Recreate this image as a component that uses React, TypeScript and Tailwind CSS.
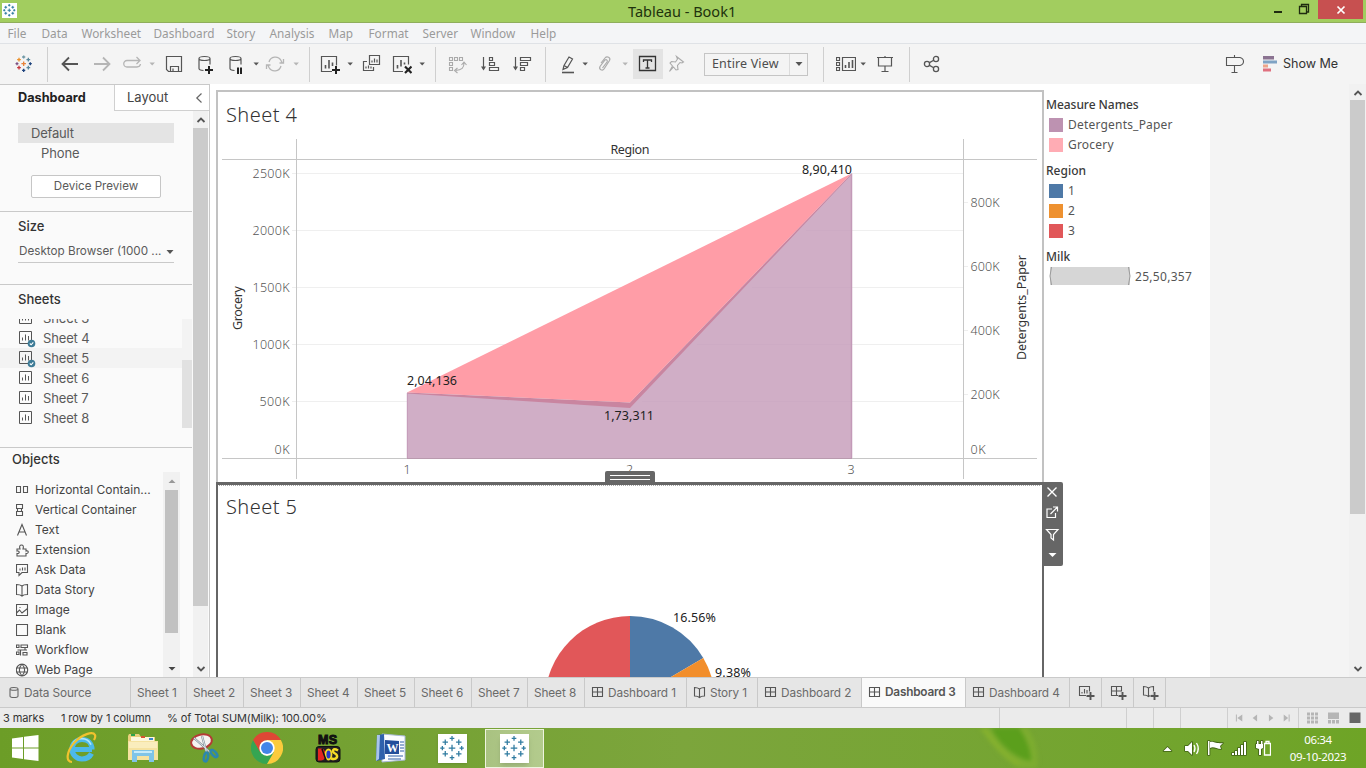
import React from "react";

type IconProps = { className?: string; children: React.ReactNode };

function Icon({ className = "", children }: IconProps) {
  return (
    <svg viewBox="0 0 20 20" className={`h-5 w-5 shrink-0 fill-none stroke-[#555] ${className}`}>
      {children}
    </svg>
  );
}

function Caret({ className = "" }: { className?: string }) {
  return (
    <svg viewBox="0 0 8 8" className={`h-2 w-2 shrink-0 ${className}`}>
      <path d="M1.500 2.500h5.400L4.200 5.600z" fill="currentColor" />
    </svg>
  );
}

function WideCaret({ className = "" }: { className?: string }) {
  return (
    <svg viewBox="0 0 8 6" className={`h-1.5 w-2 shrink-0 ${className}`}>
      <path d="M.5 1h7L4 5z" fill="#555" />
    </svg>
  );
}

function Sep({ className = "" }: { className?: string }) {
  return <div className={`h-[35px] w-px shrink-0 bg-[#cfcfcf] ${className}`} />;
}

const plus = (x: number, y: number, r: number) => `M${x - r} ${y}h${2 * r}M${x} ${y - r}v${2 * r}`;

function TableauMark({ className = "", variant = "blue" }: { className?: string; variant?: "blue" | "color" | "tiny" }) {
  const blue = "#2f7ba0";
  const c = variant === "color"
    ? ["#e8833a", "#5b879b", "#7199a6", "#c6363c", "#1f447e", "#eb912c", "#59879b", "#7b4f80", "#1f447e"]
    : [blue, blue, blue, blue, blue, blue, blue, blue, blue];
  const w = variant === "color" ? 2 : variant === "tiny" ? 2 : 1.3;
  return (
    <svg viewBox="0 0 30 30" className={`shrink-0 fill-none ${className}`} strokeWidth={w}>
      <path d={plus(14.5, 14.5, 3.4)} stroke={c[0]} />
      <path d={plus(14.5, 4.5, 2.4)} stroke={c[2]} />
      <path d={plus(14.5, 24.5, 2.4)} stroke={c[4]} />
      <path d={plus(4.5, 14.5, 2.2)} stroke={c[7]} />
      <path d={plus(24.5, 14.5, 2.2)} stroke={c[8]} />
      <path d={plus(7.5, 8.5, 2.8)} stroke={c[5]} />
      <path d={plus(21.5, 8.5, 2.8)} stroke={c[6]} />
      <path d={plus(7.5, 20.5, 2.8)} stroke={c[3]} />
      <path d={plus(21.5, 20.5, 2.8)} stroke={c[1]} />
    </svg>
  );
}

function TitleBar() {
  return (
    <header className="flex h-[23px] shrink-0 items-start border-b border-[#8fae5c] bg-[#a2cd5f]">
      <div className="ml-0.5 mt-[3px] flex h-[15px] w-[15px] items-center justify-center bg-white">
        <TableauMark variant="tiny" className="h-[15px] w-[15px]" />
      </div>
      <h1 className="ml-[611px] w-[120px] font-['Noto_Sans'] text-[14.500px] leading-[23px] text-[#20320c] whitespace-nowrap">Tableau - Book1</h1>
      <div className="ml-auto flex">
        <svg viewBox="0 0 50 19" className="h-[19px] w-[50px] fill-none stroke-[#1f2b10]">
          <path d="M6 12h8" strokeWidth="2" />
          <path d="M31.500 6.500h7v7h-7zM33.500 6V4.500h7V12H39" strokeWidth="1.3" />
        </svg>
        <div className="mr-[3px] flex h-[19px] w-[45px] items-center justify-center bg-[#c75050]">
          <svg viewBox="0 0 10 10" className="h-2.5 w-2.5 stroke-white"><path d="M1.500 1.500l7 7M8.500 1.500l-7 7" strokeWidth="1.7" /></svg>
        </div>
      </div>
    </header>
  );
}

function MenuBar() {
  const items: [string, string][] = [
    ["File", "w-[34px]"], ["Data", "w-10"], ["Worksheet", "w-[72px]"], ["Dashboard", "w-[73px]"], ["Story", "w-[43px]"],
    ["Analysis", "w-[59px]"], ["Map", "w-10"], ["Format", "w-[54px]"], ["Server", "w-12"], ["Window", "w-[60px]"], ["Help", "w-10"],
  ];
  return (
    <nav className="flex h-[21px] shrink-0 items-center border-b border-[#dfe2e6] bg-[#f4f5f7] pt-0.5 pl-[7.500px] font-['Noto_Sans'] text-[11.800px] text-[#9a9a9a]">
      {items.map(([t, w]) => <span key={t} className={`${w} shrink-0`}>{t}</span>)}
    </nav>
  );
}

function Toolbar() {
  return (
    <div className="flex h-10 shrink-0 items-center bg-[#f4f4f4] font-['Noto_Sans']">
      <TableauMark variant="color" className="ml-3.5 h-5 w-5" />
      <Sep className="ml-[13px]" />
      <Icon className="ml-3"><path d="M18 10H3M9 3.500L2.500 10 9 16.500" strokeWidth="1.800" /></Icon>
      <Icon className="ml-3 stroke-[#b5b5b5]!"><path d="M2 10h15M11 3.500L17.500 10 11 16.500" strokeWidth="1.800" /></Icon>
      <Icon className="ml-2.5 stroke-[#b5b5b5]!"><path d="M15 13H5a3.200 3.200 0 010-6.500h12.500M14.500 3l3.500 3.500-3.500 3.500M15 13q3 0 3.500-3" strokeWidth="1.3" /></Icon>
      <Caret className="ml-1.5 text-[#b5b5b5]" />
      <Icon className="ml-2"><path d="M2.500 2.500h15v15h-13l-2-2zM6.500 17.500v-5h8v5M9 17.500v-3" strokeWidth="1.2" /></Icon>
      <Icon className="ml-3">
        <path d="M3 4.500v10c0 1 1.500 1.800 4.500 2M14 4.500v6M3 4.500c0-1.200 2.300-2 5.500-2s5.500.8 5.500 2-2.300 2-5.500 2-5.500-.8-5.500-2" strokeWidth="1.2" />
        <path d="M9 16h8M13 12v8" stroke="#222" strokeWidth="2" />
      </Icon>
      <Icon className="ml-[11px]">
        <path d="M3 4.500v10c0 1 1.500 1.800 4.500 2M14 4.500v6M3 4.500c0-1.200 2.300-2 5.500-2s5.500.8 5.500 2-2.300 2-5.500 2-5.500-.8-5.500-2" strokeWidth="1.2" />
        <path d="M11 13.500v6.500M14 13.500v6.500" stroke="#222" strokeWidth="2" />
      </Icon>
      <Caret className="ml-[5px] text-[#555]" />
      <Icon className="ml-[5px] stroke-[#b5b5b5]!"><path d="M4 8a6.500 6.500 0 0112-1.500l1 2M16 12A6.500 6.500 0 014 13.500l-1-2M18.500 5v4h-4M1.500 15v-4h4" strokeWidth="1.3" /></Icon>
      <Caret className="ml-[7px] text-[#b5b5b5]" />
      <Sep className="ml-[9px]" />
      <Icon className="ml-2.5">
        <path d="M12 17.500H1.500v-15h15v9" strokeWidth="1.200" /><path d="M5.500 14.500V11M9 14.500V6M12.500 12V8.500" strokeWidth="1.6" />
        <path d="M12 16h8M16 12v8" stroke="#222" strokeWidth="2" />
      </Icon>
      <Caret className="ml-1.5 text-[#555]" />
      <Icon className="ml-[7px]"><path d="M8.500 1.500h10v9h-10zM6 7.500H2.500v9h10v-3.500M11 8.500v-2M13.500 8.500v-4M16 8.500v-3M5 14.500v-2M7.500 14.500v-3M10 14.500v-2" strokeWidth="1.200" /></Icon>
      <Icon className="ml-[11px]">
        <path d="M11 17.500H1.500v-15h15v8" strokeWidth="1.200" /><path d="M5.500 14.500V11M9 12.500V6M12.500 10.500V8.500" strokeWidth="1.6" />
        <path d="M13 12.500l6.500 6.500M19.500 12.500L13 19" stroke="#222" strokeWidth="2.200" />
      </Icon>
      <Caret className="ml-1.5 text-[#555]" />
      <Sep className="ml-[9px]" />
      <Icon className="ml-[11px] stroke-[#aaa]!"><path d="M2.500 3.500h3v3h-3zM7.500 3.500h3v3h-3zM12.500 3.500h3v3h-3zM2.500 8.500h3v3h-3zM2.500 13.500h3v3h-3zM17 9c0 5-2 7-8.500 7.500M14.500 11l2.500-3 2.500 3M10.500 14L7.500 16.500l3 2.500" strokeWidth="1.1" /></Icon>
      <Icon className="ml-[13px]"><path d="M3.500 3v12" strokeWidth="1.200" /><path d="M1 12.500h5l-2.500 4z" fill="#555" stroke="none" /><path d="M9.500 3.500h3v3h-3zM9.500 8.500h5v3h-5zM9.500 13.500h9v3h-9z" strokeWidth="1.200" /></Icon>
      <Icon className="ml-3"><path d="M3.500 3v12" strokeWidth="1.200" /><path d="M1 12.500h5l-2.500 4z" fill="#555" stroke="none" /><path d="M8.500 3.500h10v3h-10zM8.500 8.500h7v3h-7zM8.500 13.500h4v3h-4z" strokeWidth="1.200" /></Icon>
      <Sep className="ml-[13px]" />
      <Icon className="ml-3"><path d="M6 11.500l5-8.500 3.500 2-5 8.500-4.500 2zM6 11.500l3.500 2M5 15.500l2-1" strokeWidth="1.200" /><path d="M4 18.500h12" strokeWidth="1.600" /></Icon>
      <Caret className="ml-[3px] text-[#555]" />
      <Icon className="ml-1.5 stroke-[#aaa]!"><path d="M6 9l4-5c2-2.500 6-.5 4.500 2.500L9 15c-1.500 2.300-5.500.5-4-2.500L10 6c1.500-1 3 .5 2 2l-4.500 6" strokeWidth="1.200" /></Icon>
      <Caret className="ml-1.5 text-[#b5b5b5]" />
      <div className="ml-1 flex h-[30px] w-[30px] shrink-0 items-center justify-center bg-[#e3e3e3]">
        <Icon className="stroke-[#333]!"><path d="M1.500 2.500h16v14h-16zM5.500 8V6h8v2M9.500 6v8M7.500 14h4" strokeWidth="1.300" /></Icon>
      </div>
      <Icon className="ml-1 stroke-[#aaa]!"><path d="M9.500 2.500l7 5.500-1.500 1-2-.5-2.500 3 .5 4-2 .5-2.500-3L2.500 17.500 5.500 12 3 9l1.500-1.500 4 .5 2-3z" strokeWidth="1.1" /></Icon>
      <div className="ml-[17px] flex h-[23px] w-[104px] shrink-0 items-center border border-[#c5c5c5] text-[12.500px] tracking-[0.15px] text-[#4d4d4d]">
        <span className="w-[84px] pl-[7px] whitespace-nowrap">Entire View</span>
        <div className="flex h-full flex-1 items-center justify-center border-l border-[#dcdcdc]"><WideCaret /></div>
      </div>
      <Sep className="ml-[15px]" />
      <Icon className="ml-3"><path d="M.5 3.500h3v3h-3zM.5 8.500h3v3h-3zM.5 13.500h3v3h-3zM6.500 3.500h13v13h-13z" strokeWidth="1.200" /><path d="M9.500 14v-3M13 14V8M16.500 14V6" strokeWidth="1.6" /></Icon>
      <Caret className="ml-[3px] text-[#555]" />
      <Icon className="ml-2"><path d="M2 3.500h16M3.500 3.500v8.500h13v-8.500M10 2v1.500M10 12v5.500M6.500 17.500h7" strokeWidth="1.200" /></Icon>
      <Sep className="ml-3.5" />
      <Icon className="ml-[11px]"><circle cx="6" cy="10" r="2.600" strokeWidth="1.3" /><circle cx="15" cy="5" r="2.600" strokeWidth="1.3" /><circle cx="15" cy="15" r="2.600" strokeWidth="1.3" /><path d="M8.500 8.600L12.700 6.300M8.500 11.400L12.700 13.700" strokeWidth="1.3" /></Icon>
      <Icon className="ml-auto"><path d="M9.500 1v2M1.500 3.500H15q3.500 1 3.500 4t-3.500 4H1.500zM9.500 11.500v7M6.500 18.500h6" strokeWidth="1.1" /></Icon>
      <svg viewBox="0 0 14 16" className="ml-[18px] h-4 w-3.5 shrink-0">
        <path d="M0 0h11v3.500H0z" fill="#8b7391" /><path d="M0 4.500h14v3H0z" fill="#7fa3c4" /><path d="M0 8.500h5v3H0z" fill="#eda58b" /><path d="M0 12.500h8v3H0z" fill="#e0707f" />
      </svg>
      <span className="ml-1.5 w-[83px] font-['Inter'] text-[12.600px] tracking-[-0.05px] whitespace-nowrap text-[#333]">Show Me</span>
    </div>
  );
}

function Arrow({ up = false, className = "" }: { up?: boolean; className?: string }) {
  return (
    <svg viewBox="0 0 10 8" className={`h-2 w-2.5 shrink-0 fill-none stroke-[#555] ${className}`}>
      <path d={up ? "M1.500 6L5 2.500 8.500 6" : "M1.500 2L5 5.500 8.500 2"} strokeWidth="1.8" />
    </svg>
  );
}

function SheetRow({ name, used = false, active = false }: { name: string; used?: boolean; active?: boolean }) {
  return (
    <div className={`flex h-5 shrink-0 items-center pl-[18px] ${active ? "bg-[#f3f3f3]" : ""}`}>
      <svg viewBox="0 0 18 20" className="h-5 w-[18px] fill-none stroke-[#555]">
        <path d="M1.500 3.500h12v12h-12zM4.500 12.500V9.500M7.500 12.500V6.500M10.500 12.500V8" strokeWidth="1" />
        {used && <><circle cx="13.500" cy="15.500" r="3.800" fill="#3d7b96" stroke="none" /><path d="M11.800 15.500l1.300 1.300 2.200-2.500" stroke="#fff" strokeWidth="1.1" /></>}
      </svg>
      <span className="ml-[7px] pt-px">{name}</span>
    </div>
  );
}

const objects: [string, string][] = [
  ["Horizontal Contain...", "M.5 3.500h4v6h-4zM7.500 3.500h4v6h-4z"],
  ["Vertical Container", "M.5 1.500h6v4h-6zM.5 8.500h6v4h-6zM1.500 5.500v3M5.500 5.500v3"],
  ["Text", "M1.500 12.500L6 1.500 10.500 12.500M3 9h6"],
  ["Extension", "M1 6h3c-1-3 0-4 1.500-4s2.500 1 1.500 4h3v2c3-1 3 3 0 2.500V13H1v-2.500c3 .5 3-3 0-2.500z"],
  ["Ask Data", "M.5 1.500h11v8h-5.500L3 12.500v-3H.500zM4 7.500v-2M6.500 7.500v-3M9 7.500v-3"],
  ["Data Story", "M6 3C4 1.500 2.500 1.500.500 1.500v10c2 0 4 0 5.500 1.500 1.500-1.500 3.500-1.500 5.500-1.500v-10c-2 0-4 0-5.500 1.500zM6 3v10"],
  ["Image", "M.5 1.500h11v11H.5zM.5 10l3-3 2.500 3 5.500-4.500M3.500 4.500h1"],
  ["Blank", "M.5 1.500h11v11H.5z"],
  ["Workflow", "M.5 2h2.500v2.500h-2.500zM5 2h6.500v2.500h-6.500zM1.500 7h9.500M9 4.500V7M.5 9h2.500v2.500H.5zM4.500 7v5.500M7 9.500h4v2.500h-4z"],
  ["Web Page", "M6 1a5.700 6 0 100 12 5.700 6 0 000-12zM.8 5h10.500M.8 9h10.500M6 1c-3.500 4-3.500 8 0 12 3.500-4 3.500-8 0-12z"],
];

function Sidebar() {
  return (
    <aside className="flex w-[210px] shrink-0 flex-col border-t border-r border-[#c9c9c9] bg-[#fafafa] font-['Inter'] text-[13px] text-[#5a5a5a]">
      <div className="flex h-[26px] shrink-0">
        <div className="w-[114px] pl-[18px] text-[12.700px] leading-[25px] font-bold text-[#222]">Dashboard</div>
        <div className="flex flex-1 items-center justify-between border-b border-l border-[#d0d0d0] bg-white pr-[6px] pl-3 text-[#444]">
          Layout
          <svg viewBox="0 0 8 12" className="h-3 w-2 fill-none stroke-[#666]"><path d="M6.500 1.500L1.800 6l4.700 4.500" strokeWidth="1.200" /></svg>
        </div>
      </div>
      <div className="flex min-h-0 flex-1">
        <div className="flex w-[192px] shrink-0 flex-col">
          <section className="flex h-[101px] shrink-0 flex-col border-b border-[#c9c9c9] pt-3 pl-[18px]">
            <div className="h-5 w-[156px] bg-[#e4e4e4] pl-[13px] leading-5 tracking-[-0.2px]">Default</div>
            <div className="h-5 pl-[23px] leading-5 tracking-[-0.1px]">Phone</div>
            <button className="mt-3 ml-[13px] flex h-[23px] w-[130px] items-center justify-center rounded-[2px] border border-[#c6c6c6] bg-white pt-px text-[11.600px]">Device Preview</button>
          </section>
          <section className="h-[73px] shrink-0 border-b border-[#c9c9c9] px-[18px] pt-1">
            <h2 className="leading-5 font-medium text-[#333]">Size</h2>
            <div className="mt-[6px] flex h-[21px] items-center justify-between border-b border-[#c9c9c9] pb-px pl-px text-[11.700px] whitespace-nowrap">Desktop Browser (1000 ...<WideCaret /></div>
          </section>
          <section className="flex h-[163px] shrink-0 flex-col border-b border-[#c9c9c9] pt-1">
            <h2 className="h-[30px] shrink-0 pl-[18px] leading-5 font-medium text-[#333]">Sheets</h2>
            <div className="flex h-[109px]">
              <div className="flex flex-1 flex-col justify-end overflow-hidden tracking-[-0.15px]">
                <SheetRow name="Sheet 3" /><SheetRow name="Sheet 4" used /><SheetRow name="Sheet 5" used active /><SheetRow name="Sheet 6" /><SheetRow name="Sheet 7" /><SheetRow name="Sheet 8" />
              </div>
              <div className="flex w-2.5 flex-col bg-[#f3f3f3] pt-[41px]"><div className="flex-1 bg-[#e1e1e1]" /></div>
            </div>
          </section>
          <section className="flex min-h-0 flex-1 flex-col">
            <h2 className="h-6 shrink-0 pl-3 leading-[22px] font-medium text-[#333]">Objects</h2>
            <div className="flex min-h-0 flex-1">
              <div className="w-[163px] overflow-hidden pt-2 text-[12px] text-[#444]">
                {objects.map(([n, d]) => (
                  <div key={n} className="flex h-5 items-center whitespace-nowrap">
                    <svg viewBox="0 0 14 14" className="ml-4 h-3.5 w-3.5 shrink-0 fill-none stroke-[#555]"><path d={d} strokeWidth="1.1" /></svg>
                    <span className="ml-[5px]">{n}</span>
                  </div>
                ))}
              </div>
              <div className="flex w-[17px] flex-col items-center bg-[#f1f1f1] pt-1.5">
                <svg viewBox="0 0 8 6" className="h-1.5 w-2"><path d="M.5 5L4 1.500 7.500 5z" fill="#999" /></svg>
                <div className="mt-[6px] h-[143px] w-[13px] bg-[#c1c1c1]" />
                <svg viewBox="0 0 8 6" className="mt-[33px] h-1.5 w-2"><path d="M.5 1L4 4.500 7.500 1z" fill="#444" /></svg>
              </div>
            </div>
          </section>
        </div>
        <div className="ml-px flex w-[15px] flex-col items-center bg-[#f1f1f1]">
          <Arrow up className="mt-[5px]" />
          <div className="mt-1 h-[478px] w-full bg-[#cbcbcb]" />
          <Arrow className="mt-[59px]" />
        </div>
      </div>
    </aside>
  );
}

function AreaChart() {
  const left: [string, number, number][] = [["2500K", 178, 37], ["2000K", 235, 37], ["1500K", 292, 37], ["1000K", 349, 37], ["500K", 406, 30], ["0K", 454, 15]];
  const right: [string, number, number][] = [["800K", 207, 29], ["600K", 271, 29], ["400K", 335, 29], ["200K", 399, 29], ["0K", 454, 15]];
  return (
    <svg viewBox="218 92 824 390" className="block h-[390px] w-[824px] font-['Noto_Sans'] text-[12.500px]">
      <g stroke="#efefef"><path d="M297 173.500H963M297 230.500H963M297 287.500H963M297 344.500H963M297 401.500H963" /></g>
      <path d="M407 392.500L851.500 173.500 630 402.500z" fill="#ff9da7" />
      <path d="M407 392.500L630 402.500 851.500 173.500V458H407z" fill="#c985a0" />
      <path d="M407 393.500L630 408 851.500 174.500V458H407z" fill="#d0aec6" />
      <path d="M851.500 173.500V458" stroke="#c39ab8" strokeWidth="1.500" />
      <path d="M407.300 393V458" stroke="#c39ab8" />
      <path d="M642 401.500H851M697 344.500H851M752 287.500H851M806 230.500H851" stroke="#c9a5bf" strokeOpacity=".35" />
      <path d="M222 159.500H1037M222 458.500H1037M296.500 139V479M963.500 139V479" stroke="#c6c6c6" fill="none" />
      <path d="M407 458.500H852" stroke="#b99aae" />
      <path d="M292 173.500h4M292 230.500h4M292 287.500h4M292 344.500h4M292 401.500h4M964 202.500h4M964 266.500h4M964 330.500h4M964 394.500h4" stroke="#eee" />
      <text x="226" y="122" fontSize="20" textLength="71" fill="#333" fontWeight="300">Sheet 4</text>
      <text x="610.500" y="154" textLength="39" fill="#333">Region</text>
      <g fill="#555" fontWeight="300">
        {left.map(([t, y, w]) => <text key={t} x={289.5 - w} y={y} textLength={w}>{t}</text>)}
        {right.map(([t, y, w]) => <text key={t} x={970.5} y={y} textLength={w}>{t}</text>)}
        <text x="403.500" y="474">1</text><text x="626" y="474">2</text><text x="847.500" y="474">3</text>
      </g>
      <text transform="translate(242 330) rotate(-90)" textLength="44" fill="#333">Grocery</text>
      <text transform="translate(1026 360) rotate(-90)" textLength="105" fill="#333">Detergents_Paper</text>
      <g fill="#222">
        <text x="407" y="385" textLength="50">2,04,136</text>
        <text x="604" y="420" textLength="50">1,73,311</text>
        <text x="802" y="174" textLength="50">8,90,410</text>
      </g>
    </svg>
  );
}

function PieChart() {
  return (
    <svg viewBox="218 485 824 192" className="block h-[192px] w-[824px] font-['Noto_Sans'] text-[12.500px]">
      <path d="M219 485.500H1041" stroke="#aaa" strokeDasharray="1 1" />
      <text x="226" y="514" fontSize="20" textLength="71" fill="#333" fontWeight="300">Sheet 5</text>
      <path d="M630 701V616A85 85 0 00545 701z" fill="#e15759" />
      <path d="M630 701V616A85 85 0 01703.300 658z" fill="#4e79a7" />
      <path d="M630 701L703.300 658A85 85 0 01714.800 706z" fill="#f28e2b" />
      <g fill="#222"><text x="673" y="622" textLength="43">16.56%</text><text x="715" y="677" textLength="36">9.38%</text></g>
    </svg>
  );
}

function Legend() {
  const row = (c: string, t: string) => (
    <li key={t} className="flex h-5 items-center gap-[5px]"><span className={`ml-[3px] h-3.5 w-3.5 ${c}`} /><span>{t}</span></li>
  );
  return (
    <div className="ml-0.5 pt-[11px] font-['Noto_Sans'] text-[12px] text-[#555]">
      <h3 className="h-5 leading-5 font-medium tracking-[-0.05px] text-[#3a3a3a]">Measure Names</h3>
      <ul className="tracking-[0.2px]">{row("bg-[#bd92b1]", "Detergents_Paper")}{row("bg-[#ffacb4]", "Grocery")}</ul>
      <h3 className="mt-[6px] h-5 leading-5 font-medium text-[#3a3a3a]">Region</h3>
      <ul>{row("bg-[#4e79a7]", "1")}{row("bg-[#ee9130]", "2")}{row("bg-[#e15759]", "3")}</ul>
      <h3 className="mt-[6px] h-5 leading-5 font-medium text-[#3a3a3a]">Milk</h3>
      <div className="-mt-px flex h-5 items-center tracking-[0.3px]">
        <svg viewBox="0 0 82 18" className="ml-[3px] h-[18px] w-[82px]"><path d="M1 0h80v18H1z" fill="#d6d6d6" /><path d="M2.500 0Q-.5 9 2.500 18M79.500 0q3 9 0 18" stroke="#999" fill="none" /></svg>
        <span className="ml-1 pt-px">25,50,357</span>
      </div>
    </div>
  );
}

function Canvas() {
  return (
    <main className="flex min-w-0 flex-1 bg-[#f4f4f4]">
      <div className="flex w-[1000px] shrink-0 items-start bg-white">
        <div className="relative ml-1.5 flex h-full w-[828px] shrink-0 flex-col pt-1.5">
          <div className="h-[392px] shrink-0 overflow-hidden border-2 border-b-0 border-[#c2c2c2]"><AreaChart /></div>
          <div className="min-h-0 flex-1 overflow-hidden border-2 border-t-3 border-b-0 border-[#666]"><PieChart /></div>
          <div className="absolute top-[387px] left-[389px] flex h-3 w-[50px] flex-col justify-center gap-[3px] rounded-t-[2px] bg-[#666] px-[5px]"><div className="h-px bg-white" /><div className="h-px bg-white" /></div>
          <svg viewBox="0 0 21 84" className="absolute top-[398px] left-[826px] h-[84px] w-[21px] fill-none stroke-white">
            <path d="M0 0h19a2 2 0 012 2v80a2 2 0 01-2 2H0z" fill="#666" stroke="none" />
            <path d="M5.500 5.500l9 9M14.500 5.500l-9 9" strokeWidth="1.400" />
            <path d="M10 27H5v8.500h8.500V31M8.500 32l6.500-6.500M11 25h4.500v4.500" strokeWidth="1.200" />
            <path d="M4.500 47.500h11.500l-4.500 5v5.500l-2.500-2v-3.500z" strokeWidth="1.200" />
            <path d="M6.500 71h8L10.500 75z" fill="#fff" stroke="none" />
          </svg>
        </div>
        <Legend />
      </div>
      <div className="ml-auto flex w-[17px] flex-col items-center bg-[#f1f1f1]">
        <Arrow up className="mt-[5px]" />
        <div className="mt-[3px] h-[414px] w-[15px] bg-[#cbcbcb]" />
        <Arrow className="mt-auto mb-1" />
      </div>
    </main>
  );
}

const gridIcon = "M1.500 1.500h10v9h-10zM6.500 1.500v9M1.500 6h10";
const bookIcon = "M6.500 3C4.500 1.500 3 1.500 1.500 1.500v8.500c2 0 3.500 0 5 1.500 1.500-1.500 3-1.500 5-1.500V1.500c-1.500 0-3 0-5 1.500zM6.500 3v8.500";
const sheetIcon = "M1.500 1.500h10v9h-10zM4 8.500V7M6.500 8.500V4M9 8.500V5";

function SheetTabs() {
  const tabs: { t: string; w: string; d?: string; on?: boolean }[] = [
    { t: "Sheet 1", w: "w-14" }, { t: "Sheet 2", w: "w-[57px]" }, { t: "Sheet 3", w: "w-[57px]" }, { t: "Sheet 4", w: "w-[57px]" },
    { t: "Sheet 5", w: "w-[57px]" }, { t: "Sheet 6", w: "w-[57px]" }, { t: "Sheet 7", w: "w-14" }, { t: "Sheet 8", w: "w-[57px]" },
    { t: "Dashboard 1", w: "w-[102px]", d: gridIcon }, { t: "Story 1", w: "w-[71px]", d: bookIcon }, { t: "Dashboard 2", w: "w-[104px]", d: gridIcon },
    { t: "Dashboard 3", w: "w-[104px]", d: gridIcon, on: true }, { t: "Dashboard 4", w: "w-[104px]", d: gridIcon },
  ];
  return (
    <div className="flex h-[31px] shrink-0 border-t border-b border-[#cacaca] bg-[#e6e6e6] font-['Inter'] text-[11.800px] tracking-[-0.1px] text-[#6a6a6a]">
      <div className="flex w-[131px] items-center border-r border-[#c9c9c9] pl-2">
        <svg viewBox="0 0 12 14" className="h-3.5 w-3 fill-none stroke-[#666]"><path d="M2 3v7c0 2 8 2 8 0V3c0-2-8-2-8 0zc0 1.700 8 1.700 8 0" strokeWidth="1.1" /></svg>
        <span className="ml-1 pt-0.5">Data Source</span>
      </div>
      {tabs.map(({ t, w, d, on }) => (
        <div key={t} className={`${w} flex shrink-0 items-center border-r border-[#c9c9c9] pl-[6px] whitespace-nowrap ${on ? "bg-[#fafafa] font-semibold tracking-[-0.2px] text-[#555]" : ""}`}>
          {d && <svg viewBox="0 0 13 13" className="mr-1 h-[13px] w-[13px] shrink-0 fill-none stroke-[#555]"><path d={d} strokeWidth="1.1" /></svg>}
          <span className={on ? "" : "pt-0.5"}>{t}</span>
        </div>
      ))}
      {[sheetIcon, gridIcon, bookIcon].map((d) => (
        <div key={d} className="flex w-8 items-center justify-center border-r border-[#c9c9c9]">
          <svg viewBox="0 0 17 16" className="ml-px h-4 w-[17px] fill-none stroke-[#555]"><path d={d} strokeWidth="1.1" /><path d="M12.500 6.500v9M8 11h9" stroke="#e6e6e6" strokeWidth="3" /><path d="M12.500 7v8M8.500 11h8" strokeWidth="1.900" /></svg>
        </div>
      ))}
    </div>
  );
}

function StatusBar() {
  return (
    <div className="flex h-5 shrink-0 items-center bg-[#ebebeb] font-['Inter'] text-[11px] tracking-[-0.1px] whitespace-nowrap text-[#333]">
      <span className="w-[58px] pl-[3px]">3 marks</span><span className="ml-[3px] w-[106px]">1 row by 1 column</span><span>% of Total SUM(Milk): 100.00%</span>
      <div className="ml-auto flex h-full text-[#b5b5b5]">
        <div className="w-[127px] border-l border-[#cfcfcf]" /><div className="w-[27px] border-l border-[#cfcfcf]" /><div className="w-[27px] border-l border-[#cfcfcf]" /><div className="w-[47px] border-l border-[#cfcfcf]" />
        <svg viewBox="0 0 71 20" className="h-5 w-[71px] border-l border-[#cfcfcf]"><path d="M8 6.500h1v7H8zM14.500 6.500v7l-5-3.500zM29.500 6.500v7L25 10zM41.500 6.500v7L46 10zM56.500 6.500v7l4.500-3.500zM61.500 6.500h1v7h-1z" fill="currentColor" /></svg>
        <svg viewBox="0 0 67 20" className="h-5 w-[68px] border-l border-[#cfcfcf]">
          <path d="M8 4.500h3v3H8zM12 4.500h3v3h-3zM16 4.500h3v3h-3zM8 8.500h3v3H8zM12 8.500h3v3h-3zM16 8.500h3v3h-3zM8 12.500h3v3H8zM12 12.500h3v3h-3zM16 12.500h3v3h-3zM29 4.500h11v6.500H29zM29 12h3v3.500h-3zM33 12h3v3.500h-3zM37 12h3v3.500h-3z" fill="currentColor" /><path d="M50.500 4.500h11v10.500h-11z" fill="#666" />
        </svg>
      </div>
    </div>
  );
}

function Taskbar() {
  return (
    <footer className="flex h-10 shrink-0 items-center bg-linear-to-r from-[#6c9d27] via-[#7ca53c] via-50% to-[#6ea426]">
      <svg viewBox="0 0 27 26" className="ml-3 h-[26px] w-[27px] shrink-0 fill-white"><path d="M0 3.500L11 2v10.500H0zM12 1.800L26.500 0v12.500H12zM0 13.500h11V24L0 22.500zM12 13.500h14.500V26L12 24.200z" /></svg>
      <svg viewBox="0 0 32 32" className="ml-[26px] h-8 w-8 shrink-0 fill-none">
        <path d="M8 17.500H27M26.500 21.500c-2 4-5.500 5.500-9.500 5.500A9.800 9.800 0 017 17.300c0-6 4.500-9.800 10-9.800s10 3.500 10 10" stroke="#4cb9ea" strokeWidth="5.200" />
        <path d="M7.500 12.500c2-4 5-5.800 9-5.800 4.500 0 8 2.500 9.500 6" stroke="#aee6fa" strokeWidth="1.800" />
        <path d="M7 30c-7 0-5-11 2-19C17 2 28-1 30 3c.6 1.500.2 3-1 5" stroke="#f1c22e" strokeWidth="2.200" />
      </svg>
      <svg viewBox="0 0 34 32" className="ml-[29px] h-8 w-[34px] shrink-0">
        <path d="M2 4l1-2h10l2 3h14v4h3v19H2z" fill="#e9cf7c" /><path d="M5 5h23v8H5z" fill="#fdf7dc" /><path d="M2 9h30v19H2z" fill="#f5e2a0" /><path d="M3 10h28v6H3z" fill="#faedbd" />
        <path d="M5 2h4v2H5z" fill="#2da44e" /><path d="M15 4h4v2h-4z" fill="#d65432" /><path d="M23 6h4v2h-4z" fill="#3d87c9" />
        <path d="M6 18h22v12h-5v-6H11v6H6z" fill="#7fc4e8" /><path d="M8 20h18" stroke="#c7ebfa" strokeWidth="2" />
      </svg>
      <svg viewBox="0 0 32 32" className="ml-[29px] h-8 w-8 shrink-0 fill-none">
        <ellipse cx="12.500" cy="9.500" rx="10.500" ry="7" transform="rotate(-14 12.500 9.500)" fill="#f5f3f1" stroke="#b43b36" strokeWidth="2" />
        <path d="M5 6l17 15M13 4l5 18" stroke="#84919a" strokeWidth="2.200" /><path d="M5 6l17 15M13 4l5 18" stroke="#e0e5e8" strokeWidth="1" />
        <ellipse cx="17" cy="25" rx="2" ry="4.500" transform="rotate(12 17 25)" stroke="#2c87ac" strokeWidth="2.500" /><ellipse cx="25" cy="21.500" rx="2" ry="4.500" transform="rotate(-42 25 21.500)" stroke="#2c87ac" strokeWidth="2.500" />
      </svg>
      <svg viewBox="0 0 32 32" className="ml-[30px] h-8 w-8 shrink-0">
        <path d="M16 8h13.860A16 16 0 0116 32l-3-7 3-9z" fill="#fbcb3c" /><path d="M2.140 8L9.100 20 16 24l6.900-4L16 32A16 16 0 012.140 8z" fill="#35a552" /><path d="M2.140 8A16 16 0 0129.860 8H16L9.100 12v8z" fill="#de4735" />
        <circle cx="16" cy="16" r="7.700" fill="#fff" /><circle cx="16" cy="16" r="6" fill="#4285e8" />
      </svg>
      <svg viewBox="0 0 28 32" className="ml-8 h-8 w-7 shrink-0">
        <text x="3" y="12" textLength="19" className="font-['Liberation_Sans'] text-[12.500px] font-bold" fill="#111" stroke="#111">MS</text>
        <rect x="1" y="14.500" width="24" height="15.500" rx="3" fill="#222" stroke="#111" />
        <path d="M3 16.500h3c6 0 6 12 0 12H3z" fill="#e52420" /><ellipse cx="13.500" cy="22.500" rx="3" ry="5" fill="#2836c9" stroke="#f5db27" strokeWidth="1.800" /><path d="M7 17l4 11" stroke="#111" strokeWidth="1.500" /><path d="M23 18.500c-5-3-7 1-3 3s2 7-4 5" fill="none" stroke="#f5db27" strokeWidth="2.500" />
      </svg>
      <svg viewBox="0 0 34 32" className="ml-[31px] h-8 w-[34px] shrink-0">
        <path d="M8 2l23 2v24L8 30z" fill="#fbfcff" stroke="#a9b9d8" /><path d="M3 3l7-1 1 25-9 2z" fill="#2f61ac" /><path d="M3 3l3 0L5 27l-3 2z" fill="#a9c4ec" />
        <path d="M11 8l14 1v13H11z" fill="#244e9b" /><text x="12.500" y="19.500" textLength="11" className="font-['Liberation_Serif'] text-[12px] font-bold" fill="#fff">W</text>
        <path d="M26 10h4M26 13h4M26 16h4M26 19h4M14 24h15M14 27h13" stroke="#315fa8" strokeWidth="1.200" />
      </svg>
      <div className="ml-[30px] shrink-0 bg-white shadow-sm"><TableauMark className="h-[29px] w-[29px]" /></div>
      <div className="ml-[18px] flex h-[39px] w-[59px] shrink-0 items-center justify-center border border-[#eef4df] bg-linear-to-r from-[#a9c281] to-[#b3cb8d]"><div className="bg-white shadow-md"><TableauMark className="h-[29px] w-[29px]" /></div></div>
      <svg viewBox="0 0 90 40" className="ml-[431px] h-10 w-[90px] shrink-0">
        <g className="blur-[2px]">
          <path d="M4 0h48c8 10 12 24 10 40H44C28 32 16 16 4 0z" fill="#86b52e" opacity=".5" />
          <path d="M16 0h28c7 10 12 22 12 33C42 31 25 18 16 0z" fill="#4f9a17" opacity=".75" />
          <path d="M8 0c9 12 19 27 36 36" stroke="#93b82b" strokeWidth="1.500" fill="none" />
        </g>
      </svg>
      <svg viewBox="0 0 112 24" className="ml-auto h-6 w-[112px] shrink-0 fill-white">
        <g stroke="#3f6014" strokeWidth="1.600" strokeLinejoin="round" paintOrder="stroke">
          <path d="M4.500 15h8l-4-4z" /><path d="M26 10h3l4-4v13l-4-4h-3z" />
          <path d="M49 5h1.500v14H49zM51 6c4-1 5 2 13 1l-3 3 1 3c-5 0-7-3-11-1z" /><path d="M73 17h2v2h-2zM76 15h2v4h-2zM79 12h2v7h-2zM82 9h2v10h-2zM85 6h2v13h-2z" />
          <path d="M98 5h1.500v3H98zM102 5h1.500v3H102zM97 8h7v4l-2 1v6h-2v-6l-3-1z" />
        </g>
        <path d="M35 9q2 3.500 0 7M37.500 7q3.500 5.500 0 11" fill="none" stroke="#fff" strokeWidth="1.300" />
        <path d="M105.500 7.500h6v11.500h-6zM107 5.500h3v2h-3z" fill="none" stroke="#fff" strokeWidth="1.300" />
      </svg>
      <div className="mr-[17px] ml-4 w-[62px] shrink-0 text-center font-['Noto_Sans'] text-[11.500px] leading-[17px] tracking-[-0.35px] whitespace-nowrap text-white"><div>06:34</div><div>09-10-2023</div></div>
    </footer>
  );
}

export default function App() {
  return (
    <div className="flex h-[768px] w-[1366px] flex-col overflow-hidden">
      <TitleBar /><MenuBar /><Toolbar />
      <div className="flex min-h-0 flex-1"><Sidebar /><Canvas /></div>
      <SheetTabs /><StatusBar /><Taskbar />
    </div>
  );
}
